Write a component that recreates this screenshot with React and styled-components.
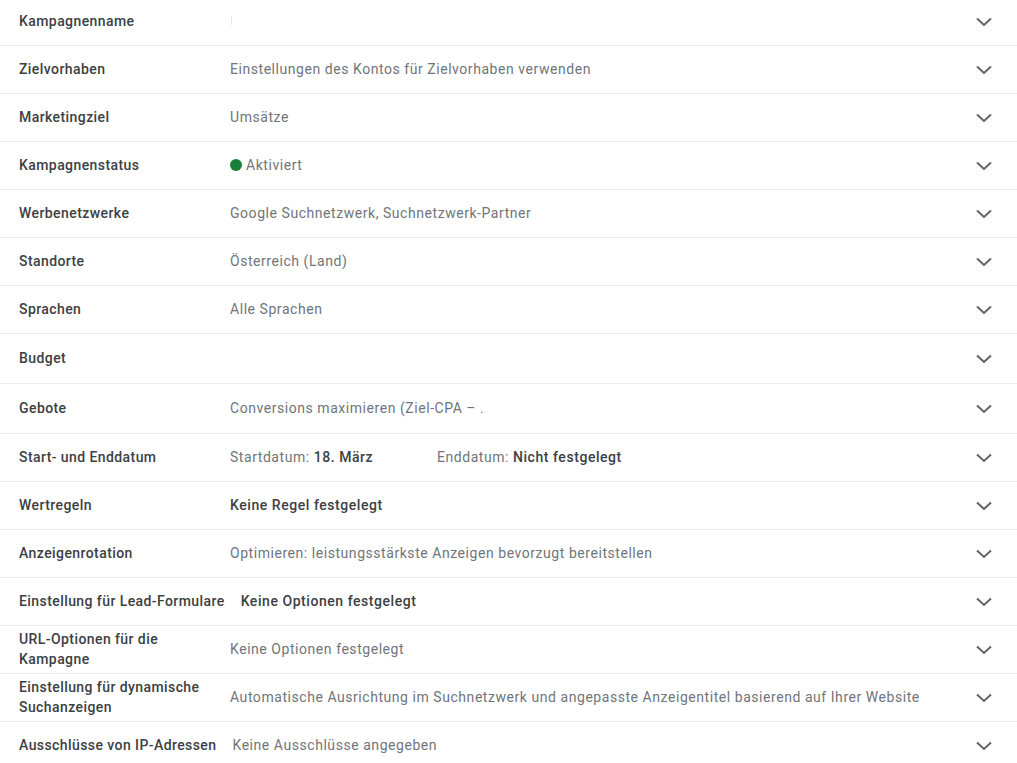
import React from 'react'
import styled, { createGlobalStyle } from 'styled-components'

const GlobalStyle = createGlobalStyle`
  html, body {
    margin: 0;
    padding: 0;
    background: #fff;
    overflow: hidden;
  }
  body {
    font-family: Roboto, 'Noto Sans', sans-serif;
    -webkit-font-smoothing: antialiased;
  }
`

const List = styled.div`
  width: 1017px;
  margin-top: -2px;
`

const Row = styled.div`
  display: flex;
  align-items: center;
  height: ${p => p.tall ? 49 : 47}px;
  box-sizing: content-box;
  padding: 0 24px 0 19px;
  border-bottom: 1px solid #ebebeb;
  &:last-child {
    border-bottom: none;
  }
`

const Label = styled.div`
  flex: 0 0 auto;
  width: ${p => p.nowrap ? 'auto' : '195px'};
  min-width: 195px;
  white-space: ${p => p.nowrap ? 'nowrap' : 'normal'};
  margin: 0 16px 2px 0;
  font-size: 14px;
  font-weight: 500;
  line-height: 20px;
  color: #3c4043;
  letter-spacing: 0.42px;
`

const Value = styled.div`
  flex: 1;
  display: flex;
  align-items: center;
  margin-bottom: 2px;
  font-size: 14px;
  line-height: 20px;
  color: #70757a;
  letter-spacing: 0.55px;
  white-space: nowrap;
`

const Strong = styled.span`
  color: #3c4043;
  font-weight: 500;
  margin-left: ${p => p.gap ? 4 : 0}px;
`

const DateCell = styled.span`
  display: inline-block;
  min-width: 207px;
`

const Dot = styled.span`
  width: 12px;
  height: 12px;
  border-radius: 50%;
  background: #188038;
  margin-right: 4px;
`

const Caret = styled.span`
  width: 1px;
  height: 9px;
  margin-left: 1px;
  background: #eee6c8;
`

const Chevron = styled.svg`
  flex: 0 0 auto;
  width: 18px;
  height: 18px;
`

const ChevronIcon = () => (
  <Chevron viewBox="0 0 18 18">
    <path d="M2 5.5 L9 12 L16 5.5" fill="none" stroke="#5f6368" strokeWidth="2" />
  </Chevron>
)

const rows = [
  { label: 'Kampagnenname', value: <Caret /> },
  { label: 'Zielvorhaben', value: 'Einstellungen des Kontos für Zielvorhaben verwenden' },
  { label: 'Marketingziel', value: 'Umsätze' },
  { label: 'Kampagnenstatus', value: <><Dot />Aktiviert</> },
  { label: 'Werbenetzwerke', value: 'Google Suchnetzwerk, Suchnetzwerk-Partner' },
  { label: 'Standorte', value: 'Österreich (Land)' },
  { label: 'Sprachen', value: 'Alle Sprachen' },
  { label: 'Budget', value: '', tall: true },
  { label: 'Gebote', value: 'Conversions maximieren (Ziel-CPA – .', tall: true },
  {
    label: 'Start- und Enddatum',
    value: (
      <>
        <DateCell>Startdatum:<Strong gap>18. März</Strong></DateCell>
        <span>Enddatum:<Strong gap>Nicht festgelegt</Strong></span>
      </>
    ),
  },
  { label: 'Wertregeln', value: <Strong>Keine Regel festgelegt</Strong> },
  { label: 'Anzeigenrotation', value: 'Optimieren: leistungsstärkste Anzeigen bevorzugt bereitstellen' },
  { label: 'Einstellung für Lead-Formulare', nowrap: true, value: <Strong>Keine Optionen festgelegt</Strong> },
  { label: 'URL-Optionen für die Kampagne', value: 'Keine Optionen festgelegt' },
  { label: 'Einstellung für dynamische Suchanzeigen', value: 'Automatische Ausrichtung im Suchnetzwerk und angepasste Anzeigentitel basierend auf Ihrer Website' },
  { label: 'Ausschlüsse von IP-Adressen', nowrap: true, value: 'Keine Ausschlüsse angegeben' },
]

export default function App() {
  return (
    <>
      <GlobalStyle />
      <List>
        {rows.map(r => (
          <Row key={r.label} tall={r.tall}>
            <Label nowrap={r.nowrap}>{r.label}</Label>
            <Value>{r.value}</Value>
            <ChevronIcon />
          </Row>
        ))}
      </List>
    </>
  )
}
